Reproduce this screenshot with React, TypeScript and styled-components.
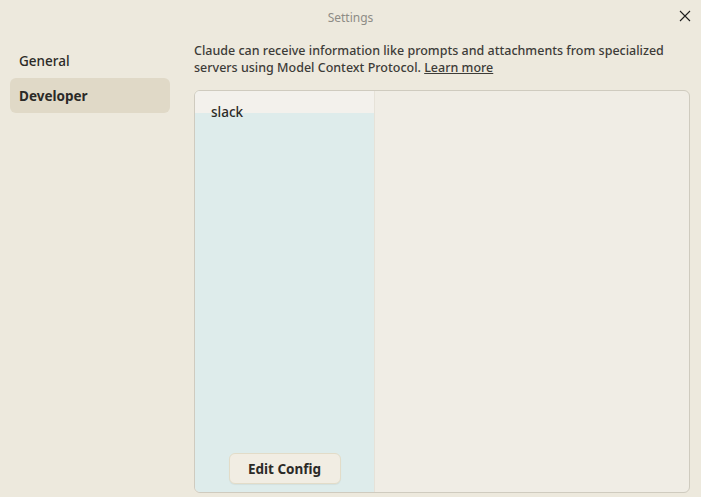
import React from "react";
import styled, { createGlobalStyle } from "styled-components";

const Global = createGlobalStyle`
  html, body { margin: 0; padding: 0; }
  body {
    background: #ede9dd;
    font-family: "Noto Sans", "Lato", sans-serif;
    color: #2b2a27;
  }
`;

const Window = styled.div`
  width: 701px;
  height: 497px;
  display: flex;
  flex-direction: column;
  background: #ede9dd;
  overflow: hidden;
`;

const TitleBar = styled.div`
  height: 34px;
  display: flex;
  align-items: center;
  justify-content: center;
  position: relative;
  font-size: 12px;
  color: #8e8c86;
`;

const Close = styled.button`
  position: absolute;
  right: 8px;
  top: 8px;
  width: 16px;
  height: 16px;
  border: 0;
  padding: 0;
  background: none;
  display: flex;
  align-items: center;
  justify-content: center;
`;

const Body = styled.div`
  flex: 1;
  display: flex;
  gap: 24px;
  padding: 0 11px 4px 10px;
  min-height: 0;
`;

const Sidebar = styled.nav`
  width: 160px;
  display: flex;
  flex-direction: column;
  padding-top: 9px;
`;

const NavItem = styled.div<{ $active?: boolean }>`
  height: 35px;
  display: flex;
  align-items: center;
  padding-left: 9px;
  border-radius: 6px;
  font-size: 13.5px;
  font-weight: ${(p) => (p.$active ? 700 : 500)};
  background: ${(p) => (p.$active ? "#e0d9c7" : "transparent")};
  color: #2b2a27;
`;

const Main = styled.div`
  flex: 1;
  display: flex;
  flex-direction: column;
  gap: 14px;
  padding-top: 8px;
  min-width: 0;
`;

const Description = styled.p`
  margin: 0;
  max-width: 475px;
  font-size: 12.5px;
  line-height: 17px;
  color: #3d3c38;
  font-weight: 500;
`;

const Link = styled.a`
  color: #3d3c38;
  text-decoration: underline;
`;

const Panel = styled.div`
  flex: 1;
  display: flex;
  border: 1px solid #cfcbbf;
  border-radius: 6px;
  overflow: hidden;
  background: #f0ede5;
`;

const ServerList = styled.div`
  width: 179px;
  display: flex;
  flex-direction: column;
  background: #deeceb;
  border-right: 1px solid #e6e2d8;
`;

const ServerRow = styled.div`
  height: 22px;
  background: #f3f1ec;
  position: relative;
`;

const ServerName = styled.span`
  position: absolute;
  left: 16px;
  top: 12px;
  font-size: 13.5px;
  font-weight: 500;
  color: #2b2a27;
`;

const ListFooter = styled.div`
  margin-top: auto;
  display: flex;
  justify-content: center;
  padding-bottom: 8px;
`;

const Button = styled.button`
  width: 112px;
  height: 31px;
  border-radius: 6px;
  border: 1px solid #e2dcc8;
  background: #f1ede3;
  font-family: inherit;
  font-size: 13.5px;
  font-weight: 700;
  color: #2b2a27;
  box-shadow: 0 1px 1px rgba(0, 0, 0, 0.05);
`;

const Detail = styled.div`
  flex: 1;
`;

export default function App() {
  return (
    <Window>
      <Global />
      <TitleBar>
        Settings
        <Close aria-label="Close">
          <svg width="12" height="12" viewBox="0 0 12 12">
            <path d="M1 1L11 11M11 1L1 11" stroke="#1e1e1e" strokeWidth="1.1" />
          </svg>
        </Close>
      </TitleBar>
      <Body>
        <Sidebar>
          <NavItem>General</NavItem>
          <NavItem $active>Developer</NavItem>
        </Sidebar>
        <Main>
          <Description>
            Claude can receive information like prompts and attachments from specialized
            servers using Model Context Protocol. <Link>Learn more</Link>
          </Description>
          <Panel>
            <ServerList>
              <ServerRow>
                <ServerName>slack</ServerName>
              </ServerRow>
              <ListFooter>
                <Button>Edit Config</Button>
              </ListFooter>
            </ServerList>
            <Detail />
          </Panel>
        </Main>
      </Body>
    </Window>
  );
}
